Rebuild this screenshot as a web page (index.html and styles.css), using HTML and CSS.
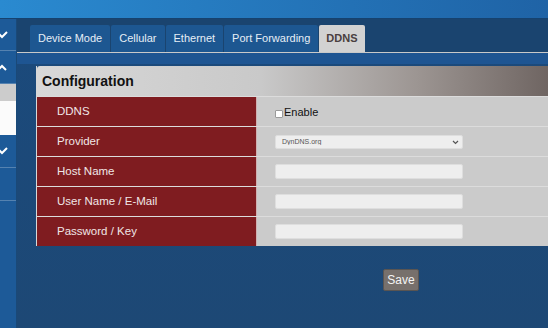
FILE: index.html
```html
<!DOCTYPE html>
<html lang="en">
<head>
  <meta charset="UTF-8">
  <title>DDNS</title>
  <link rel="stylesheet" href="styles.css">
</head>
<body>
  <div class="topbar"></div>
  <div class="layout">
    <div class="sidebar">
      <div class="side-item first">
        <svg class="chev" width="10" height="10" viewBox="0 0 10 10"><polyline points="-2,2 2,6 7,1" fill="none" stroke="#fff" stroke-width="2"/></svg>
      </div>
      <div class="side-item">
        <svg class="chev" width="10" height="10" viewBox="0 0 10 10"><polyline points="-2,7 2,3 6,7" fill="none" stroke="#fff" stroke-width="2"/></svg>
      </div>
      <div class="side-item gray"></div>
      <div class="side-item white"></div>
      <div class="side-item">
        <svg class="chev" width="10" height="10" viewBox="0 0 10 10"><polyline points="-2,2 2,6 7,1" fill="none" stroke="#fff" stroke-width="2"/></svg>
      </div>
      <div class="side-item"></div>
      <div class="side-item rest"></div>
    </div>
    <div class="main">
      <div class="tabs">
        <div class="tab">Device Mode</div>
        <div class="tab">Cellular</div>
        <div class="tab">Ethernet</div>
        <div class="tab">Port Forwarding</div>
        <div class="tab active">DDNS</div>
      </div>
      <div class="tab-strip"></div>
      <div class="panel">
        <div class="panel-head">Configuration</div>
        <div class="row">
          <div class="label">DDNS</div>
          <div class="value"><input type="checkbox" class="check"><span class="enable">Enable</span></div>
        </div>
        <div class="row">
          <div class="label">Provider</div>
          <div class="value">
            <span class="select-wrap">
              <select class="field">
                <option>DynDNS.org</option>
              </select>
              <svg class="arrow" width="7" height="5" viewBox="0 0 7 5"><polyline points="1,1 3.5,3.5 6,1" fill="none" stroke="#555" stroke-width="1.2"/></svg>
            </span>
          </div>
        </div>
        <div class="row">
          <div class="label">Host Name</div>
          <div class="value"><input type="text" class="field"></div>
        </div>
        <div class="row">
          <div class="label">User Name / E-Mail</div>
          <div class="value"><input type="text" class="field"></div>
        </div>
        <div class="row">
          <div class="label">Password / Key</div>
          <div class="value"><input type="password" class="field"></div>
        </div>
      </div>
      <div class="actions">
        <button class="save">Save</button>
      </div>
    </div>
  </div>
</body>
</html>
```

FILE: styles.css
```css
body {
  margin: 0;
  font-family: "Liberation Sans", Arial, sans-serif;
  background: #1c4a7b;
  overflow: hidden;
}
.topbar {
  height: 18px;
  background: linear-gradient(to right, #2a8ad0, #1f63a6);
  border-bottom: 1px solid #16426f;
}
.layout {
  display: flex;
  height: 309px;
}
.sidebar {
  width: 17px;
  flex-shrink: 0;
  background: #1d5a98;
  border-right: 1px solid #1a4978;
  box-sizing: border-box;
  display: flex;
  flex-direction: column;
  overflow: hidden;
}
.side-item {
  height: 32px;
  flex-shrink: 0;
  border-bottom: 1px solid #5582b0;
  position: relative;
}
.side-item.first {
  height: 31px;
}
.side-item.gray {
  height: 17px;
  background: #cccccc;
  border-bottom: none;
}
.side-item.white {
  height: 34px;
  background: #fbfbfb;
  border-bottom: none;
}
.side-item.rest {
  flex: 1;
  border-bottom: none;
}
.chev {
  position: absolute;
  left: 0;
  top: 12px;
}
.main {
  flex: 1;
  min-width: 0;
  overflow: hidden;
  display: flex;
  flex-direction: column;
  background: linear-gradient(to bottom, #1b4a7c, #1d4875);
}
.tabs {
  display: flex;
  gap: 1px;
  padding: 6px 0 0 13px;
  background: #1a446f;
  height: 27px;
  flex-shrink: 0;
}
.tab {
  background: #1d5791;
  color: #e6eef6;
  font-size: 11px;
  padding: 0 8px;
  line-height: 27px;
  height: 27px;
  border-radius: 2px 2px 0 0;
}
.tab.active {
  background: #d2d2d2;
  color: #4a4040;
  font-weight: bold;
  padding: 0 7px;
}
.tab-strip {
  height: 11px;
  flex-shrink: 0;
  border-top: 1px solid #c9c9c9;
  background: #1e5592;
  margin-bottom: 2px;
}
.panel {
  margin-left: 19px;
  width: 560px;
  flex-shrink: 0;
  border-left: 1px solid #d8d8d8;
}
.panel-head {
  height: 30px;
  line-height: 30px;
  padding-left: 5px;
  font-size: 14px;
  font-weight: bold;
  color: #111111;
  background: linear-gradient(to right, #d8d8d8 0%, #c9c9c9 40%, #9c9592 68%, #5e5350 100%);
  border-radius: 3px 0 0 0;
}
.row {
  display: flex;
  height: 29px;
  border-top: 1px solid #dcdcdc;
}
.label {
  width: 199px;
  padding-left: 20px;
  background: #7f1c20;
  color: #f0e6e6;
  font-size: 11.5px;
  line-height: 29px;
  border-right: 1px solid #d0b0b0;
}
.value {
  flex: 1;
  background: #cbcbcb;
  display: flex;
  align-items: center;
  padding-left: 18px;
}
.check {
  appearance: none;
  width: 8px;
  height: 8px;
  margin: 5px 1px 0 0;
  background: #ffffff;
  border: 1px solid #9a9a9a;
  border-radius: 1px;
}
.enable {
  font-size: 11px;
  color: #111111;
}
.field {
  width: 188px;
  height: 15px;
  box-sizing: border-box;
  border: 1px solid #dedede;
  border-radius: 2px;
  background: #eeeeee;
  font-family: "Liberation Sans", Arial, sans-serif;
  font-size: 7px;
  color: #555555;
  padding: 0 0 0 6px;
  margin: 0;
}
.select-wrap {
  position: relative;
  display: flex;
}
select.field {
  appearance: none;
  height: 14px;
}
.arrow {
  position: absolute;
  right: 4px;
  top: 5px;
}
.actions {
  display: flex;
  padding: 23px 0 0 366px;
}
.save {
  width: 36px;
  height: 22px;
  padding: 0;
  background: #77706c;
  color: #f4f4f4;
  border: 1px solid #5a5552;
  border-radius: 2px;
  font-family: "Liberation Sans", Arial, sans-serif;
  font-size: 12px;
}
```
